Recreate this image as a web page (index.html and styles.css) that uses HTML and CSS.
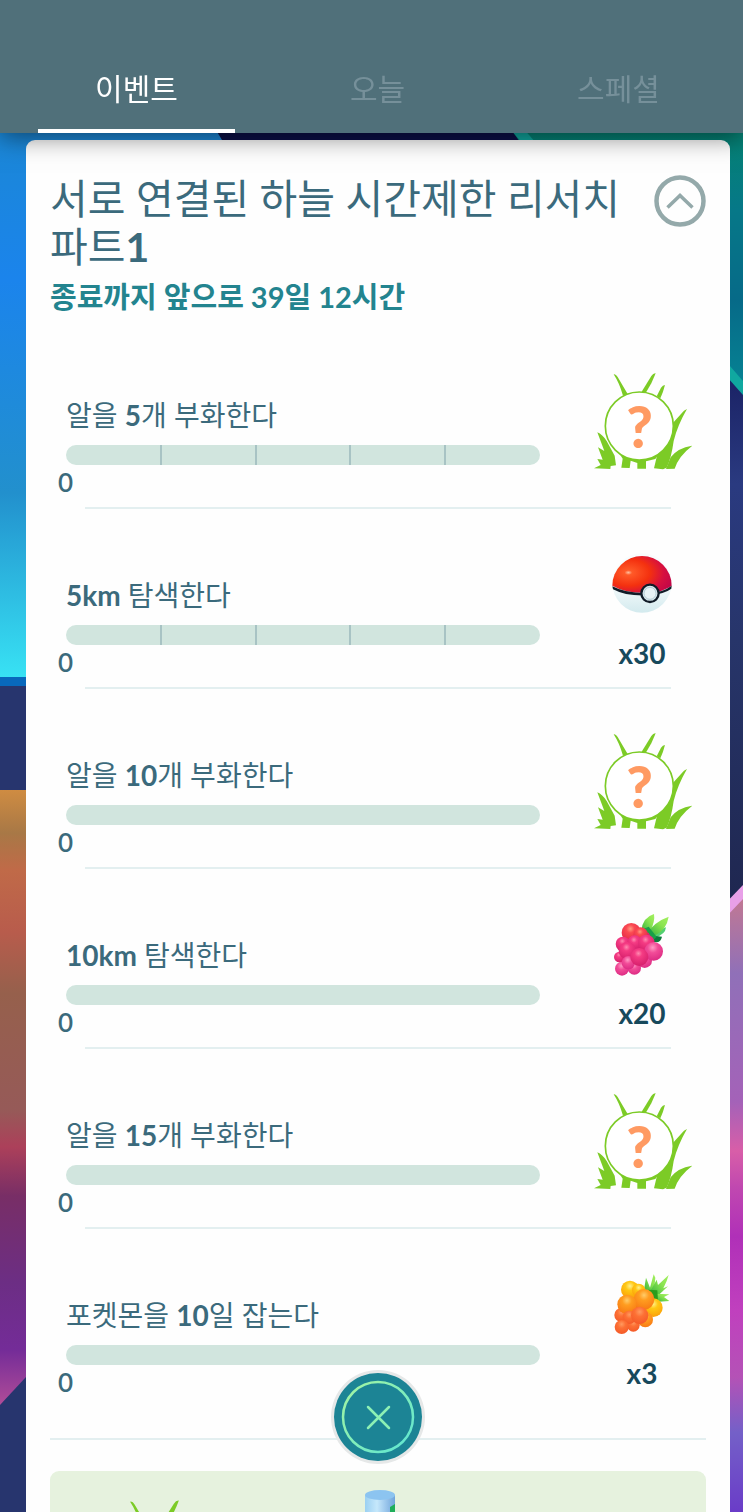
FILE: index.html
```html
<!DOCTYPE html>
<html lang="ko">
<head>
    <meta charset="UTF-8">
    <meta name="viewport" content="width=device-width, initial-scale=1.0">
    <title>리서치</title>
    <link rel="stylesheet" href="styles.css">
</head>
<body>
    <svg class="backdrop" viewBox="0 0 743 1512" preserveAspectRatio="none" aria-hidden="true">
        <defs>
            <linearGradient id="sky" gradientUnits="userSpaceOnUse" x1="0" y1="133" x2="0" y2="678">
                <stop offset="0" stop-color="#1b87d6"/>
                <stop offset=".27" stop-color="#1b84ec"/>
                <stop offset=".66" stop-color="#2290cd"/>
                <stop offset="1" stop-color="#38e2f4"/>
            </linearGradient>
            <linearGradient id="dusk" gradientUnits="userSpaceOnUse" x1="0" y1="790" x2="0" y2="1405">
                <stop offset="0" stop-color="#cf8c42"/>
                <stop offset=".07" stop-color="#a87846"/>
                <stop offset=".13" stop-color="#c06a48"/>
                <stop offset=".23" stop-color="#b85c4c"/>
                <stop offset=".33" stop-color="#96604c"/>
                <stop offset=".52" stop-color="#965a58"/>
                <stop offset=".58" stop-color="#ac405a"/>
                <stop offset=".66" stop-color="#782e66"/>
                <stop offset=".8" stop-color="#6c2e84"/>
                <stop offset=".91" stop-color="#742c98"/>
                <stop offset="1" stop-color="#b04c98"/>
            </linearGradient>
            <linearGradient id="sea" gradientUnits="userSpaceOnUse" x1="0" y1="133" x2="0" y2="390">
                <stop offset="0" stop-color="#058274"/>
                <stop offset=".3" stop-color="#067888"/>
                <stop offset=".65" stop-color="#066a88"/>
                <stop offset="1" stop-color="#068494"/>
            </linearGradient>
            <linearGradient id="night" gradientUnits="userSpaceOnUse" x1="0" y1="380" x2="0" y2="900">
                <stop offset="0" stop-color="#1b2366"/>
                <stop offset=".2" stop-color="#2a3a80"/>
                <stop offset=".5" stop-color="#27356a"/>
                <stop offset="1" stop-color="#1f2750"/>
            </linearGradient>
            <linearGradient id="dawn" gradientUnits="userSpaceOnUse" x1="0" y1="900" x2="0" y2="1512">
                <stop offset="0" stop-color="#c07894"/>
                <stop offset=".12" stop-color="#9070b8"/>
                <stop offset=".33" stop-color="#a462b8"/>
                <stop offset=".41" stop-color="#d85ea8"/>
                <stop offset=".47" stop-color="#c048b0"/>
                <stop offset=".55" stop-color="#b030b8"/>
                <stop offset=".67" stop-color="#c040be"/>
                <stop offset=".78" stop-color="#b452b6"/>
                <stop offset=".87" stop-color="#7460c8"/>
                <stop offset="1" stop-color="#6a3cc8"/>
            </linearGradient>
        </defs>
        <rect width="743" height="1512" fill="#27356e"/>
        <rect width="371" height="678" fill="url(#sky)"/>
        <rect y="677" width="371" height="9" fill="#0868bc"/>
        <rect y="790" width="371" height="700" fill="url(#dusk)"/>
        <path d="M0 1405 26 1377 371 1010V1512H0Z" fill="#27356e"/>
        <path d="M371 0H743V1512H371Z" fill="url(#night)"/>
        <path d="M210 120 240 170H540L505 120Z" fill="#0c1048"/>
        <path d="M505 120H743V384L540 172Z" fill="url(#sea)"/>
        <path d="M502 120H516L743 381V395L728 378Z" fill="#10a8a0"/>
        <path d="M743 890V1512H600V1040Z" fill="url(#dawn)"/>
        <path d="M743 885V899L600 1050V1034Z" fill="#e8a0e8"/>
    </svg>

    <!-- shared drawings -->
    <svg class="sprites" aria-hidden="true">
        <defs>
            <radialGradient id="ball-red" cx=".27" cy=".45" r=".8">
                <stop offset="0" stop-color="#ffc0a0"/>
                <stop offset=".08" stop-color="#ff5a28"/>
                <stop offset=".45" stop-color="#f4310f"/>
                <stop offset=".75" stop-color="#d60f40"/>
                <stop offset="1" stop-color="#c00648"/>
            </radialGradient>
            <linearGradient id="ball-white" x1="0" y1="0" x2="0" y2="1">
                <stop offset=".5" stop-color="#f8fcfd"/>
                <stop offset="1" stop-color="#d3eaee"/>
            </linearGradient>
            <radialGradient id="drupe-red" cx=".45" cy=".3" r=".7">
                <stop offset="0" stop-color="#ff9a80"/>
                <stop offset=".3" stop-color="#fb4a52"/>
                <stop offset="1" stop-color="#e02548"/>
            </radialGradient>
            <radialGradient id="drupe-pink" cx=".45" cy=".3" r=".7">
                <stop offset="0" stop-color="#ff8ab0"/>
                <stop offset=".3" stop-color="#f53c84"/>
                <stop offset="1" stop-color="#d61f6c"/>
            </radialGradient>
            <radialGradient id="drupe-rose" cx=".45" cy=".3" r=".7">
                <stop offset="0" stop-color="#ff9ac4"/>
                <stop offset=".4" stop-color="#f24c98"/>
                <stop offset="1" stop-color="#dd2c84"/>
            </radialGradient>
            <radialGradient id="drupe-gold" cx=".5" cy=".3" r=".7">
                <stop offset="0" stop-color="#fff08a"/>
                <stop offset=".35" stop-color="#ffc814"/>
                <stop offset="1" stop-color="#fba008"/>
            </radialGradient>
            <radialGradient id="drupe-orange" cx=".5" cy=".3" r=".7">
                <stop offset="0" stop-color="#ffcc6a"/>
                <stop offset=".35" stop-color="#ff9d20"/>
                <stop offset="1" stop-color="#f87a14"/>
            </radialGradient>
            <radialGradient id="drupe-coral" cx=".5" cy=".3" r=".7">
                <stop offset="0" stop-color="#ff9a60"/>
                <stop offset=".4" stop-color="#fd7034"/>
                <stop offset="1" stop-color="#f45a28"/>
            </radialGradient>
            <linearGradient id="leaf" x1="0" y1="1" x2="1" y2="0">
                <stop offset="0" stop-color="#2fae3c"/>
                <stop offset=".6" stop-color="#8ae450"/>
                <stop offset="1" stop-color="#a4f060"/>
            </linearGradient>
            <linearGradient id="ring" x1="0" y1="0" x2="1" y2="1">
                <stop offset="0" stop-color="#a6f5a0"/>
                <stop offset="1" stop-color="#5ce6d4"/>
            </linearGradient>
            <linearGradient id="vial" x1="0" y1="0" x2="1" y2="0">
                <stop offset="0" stop-color="#9bd0f2"/>
                <stop offset=".4" stop-color="#c6e8fb"/>
                <stop offset="1" stop-color="#6fa4dc"/>
            </linearGradient>
        </defs>

        <symbol id="grass" viewBox="66 65 300 300">
            <g fill="#7ccb26">
                <path d="M131 72Q137 70 143 80L173 131 159 136Q148 98 131 72Z"/>
                <path d="M257 69Q250 68 244 77L214 126 227 128Q246 100 257 69Z"/>
                <path d="M285 104Q278 104 273 112L260 138 271 144Q280 124 285 104Z"/>
                <path d="M351 176Q341 180 335 189L306 221Q308 262 282 290L262 312 252 354 279 357 290 352Q304 323 311 272 322 226 351 176Z"/>
                <path d="M367 286Q324 292 302 321L288 356 314 355Q326 317 367 286Z"/>
                <path d="M72 354 92 344 82 326 98 328 84 291 103 302 82 246Q97 252 110 272L134 316 138 345 122 347 121 356Z"/>
                <path d="M142 300 158 325 154 352 179 353 182 331 202 338 202 355 228 355 228 333 256 326 290 280 270 310 232 325 190 325Z"/>
            </g>
            <circle cx="208" cy="227" r="102" fill="#fff" stroke="#7ccb26" stroke-width="5"/>
            <text x="209" y="293" class="mystery" text-anchor="middle">?</text>
        </symbol>

        <symbol id="ball" viewBox="59 42 192 192">
            <circle cx="155" cy="135" r="89" fill="url(#ball-white)"/>
            <path d="M66 143A89 89 0 1 1 244 143Q220 161 178 164 110 168 66 143Z" fill="url(#ball-red)"/>
            <path d="M66 145Q110 168 178 165 220 162 244 143L243 152Q222 168 178 172 108 176 68 154Z" fill="#111c28"/>
            <circle cx="179" cy="166" r="26" fill="#d9eaef" stroke="#111c28" stroke-width="7"/>
            <circle cx="179" cy="166" r="18" fill="#e8f3f6" stroke="#b6ccd4" stroke-width="3"/>
        </symbol>

        <symbol id="razz" viewBox="64 68 192 192">
            <path d="M158 124Q162 84 196 74 200 96 184 128Z" fill="url(#leaf)"/>
            <path d="M232 114Q230 136 200 144L182 134Z" fill="#52d070"/>
            <path d="M220 142Q216 162 196 158L184 138Z" fill="#0c7c3c"/>
            <path d="M176 132Q196 98 240 82 234 120 200 138Z" fill="url(#leaf)"/>
            <path d="M156 122 180 112 204 142 186 160Z" fill="#18a048"/>
            <path d="M108 140 180 130 205 180 180 225 130 240 92 225Z" fill="#d8266c"/>
            <circle cx="128" cy="130" r="29" fill="url(#drupe-red)"/>
            <circle cx="156" cy="136" r="22" fill="url(#drupe-red)"/>
            <circle cx="103" cy="164" r="22" fill="url(#drupe-pink)"/>
            <circle cx="137" cy="236" r="20" fill="url(#drupe-rose)"/>
            <circle cx="168" cy="214" r="22" fill="url(#drupe-rose)"/>
            <circle cx="138" cy="160" r="22" fill="url(#drupe-pink)"/>
            <circle cx="173" cy="161" r="25" fill="url(#drupe-pink)"/>
            <circle cx="195" cy="186" r="28" fill="url(#drupe-rose)"/>
            <circle cx="92" cy="203" r="16" fill="url(#drupe-pink)"/>
            <circle cx="116" cy="184" r="26" fill="url(#drupe-pink)"/>
            <circle cx="100" cy="238" r="21" fill="url(#drupe-rose)"/>
            <circle cx="119" cy="220" r="20" fill="url(#drupe-rose)"/>
            <circle cx="152" cy="203" r="27" fill="url(#drupe-pink)"/>
        </symbol>

        <symbol id="golden" viewBox="64 45 192 192">
            <g fill="url(#leaf)">
                <path d="M166 98 172 62 184 92 195 52 200 62 196 104Z"/>
                <path d="M184 104 204 68 208 84 240 54 234 72 224 94 238 88 206 118Z"/>
                <path d="M196 110 242 112 226 120 242 132 210 134Z"/>
            </g>
            <path d="M178 98 206 100 208 132 190 124Z" fill="#2a9c1c"/>
            <path d="M108 110 180 105 205 155 180 190 130 210 92 195Z" fill="#f8741c"/>
            <circle cx="124" cy="98" r="27" fill="url(#drupe-gold)"/>
            <circle cx="150" cy="100" r="20" fill="url(#drupe-gold)"/>
            <circle cx="194" cy="152" r="28" fill="url(#drupe-gold)"/>
            <circle cx="170" cy="188" r="23" fill="url(#drupe-orange)"/>
            <circle cx="134" cy="205" r="19" fill="url(#drupe-coral)"/>
            <circle cx="98" cy="174" r="21" fill="url(#drupe-coral)"/>
            <circle cx="166" cy="127" r="31" fill="url(#drupe-orange)"/>
            <circle cx="115" cy="142" r="29" fill="url(#drupe-orange)"/>
            <circle cx="122" cy="181" r="20" fill="url(#drupe-coral)"/>
            <circle cx="153" cy="175" r="26" fill="url(#drupe-coral)"/>
            <circle cx="99" cy="210" r="21" fill="url(#drupe-coral)"/>
        </symbol>
    </svg>

    <nav class="tabs">
        <a href="#event" class="tab active" aria-current="page">이벤트</a>
        <a href="#today" class="tab">오늘</a>
        <a href="#special" class="tab">스페셜</a>
    </nav>

    <main class="card">
        <header class="card-head">
            <div class="heading">
                <h1>서로 연결된 하늘 시간제한 리서치 파트<b>1</b></h1>
                <p class="deadline">종료까지 앞으로 39일 12시간</p>
            </div>
            <button class="collapse" type="button" aria-label="접기">
                <svg viewBox="0 0 52 52" fill="none" stroke="#94a9aa">
                    <circle cx="26" cy="26" r="23.5" stroke-width="4.5"/>
                    <path d="M13.5 32.5 26 20.5 38.5 32.5" stroke-width="3.5"/>
                </svg>
            </button>
        </header>

        <ul class="tasks">
            <li class="task">
                <div class="goal">
                    <label for="task1">알을 <b>5</b>개 부화한다</label>
                    <progress id="task1" class="steps" value="0" max="5"></progress>
                    <span class="count">0</span>
                </div>
                <div class="reward"><svg class="grass"><use href="#grass"/></svg></div>
            </li>
            <li class="task">
                <div class="goal">
                    <label for="task2"><b>5km</b> 탐색한다</label>
                    <progress id="task2" class="steps" value="0" max="5"></progress>
                    <span class="count">0</span>
                </div>
                <div class="reward"><svg class="item"><use href="#ball"/></svg><span>x30</span></div>
            </li>
            <li class="task">
                <div class="goal">
                    <label for="task3">알을 <b>10</b>개 부화한다</label>
                    <progress id="task3" value="0" max="10"></progress>
                    <span class="count">0</span>
                </div>
                <div class="reward"><svg class="grass"><use href="#grass"/></svg></div>
            </li>
            <li class="task">
                <div class="goal">
                    <label for="task4"><b>10km</b> 탐색한다</label>
                    <progress id="task4" value="0" max="10"></progress>
                    <span class="count">0</span>
                </div>
                <div class="reward"><svg class="item"><use href="#razz"/></svg><span>x20</span></div>
            </li>
            <li class="task">
                <div class="goal">
                    <label for="task5">알을 <b>15</b>개 부화한다</label>
                    <progress id="task5" value="0" max="15"></progress>
                    <span class="count">0</span>
                </div>
                <div class="reward"><svg class="grass"><use href="#grass"/></svg></div>
            </li>
            <li class="task">
                <div class="goal">
                    <label for="task6">포켓몬을 <b>10</b>일 잡는다</label>
                    <progress id="task6" value="0" max="10"></progress>
                    <span class="count">0</span>
                </div>
                <div class="reward"><svg class="item"><use href="#golden"/></svg><span>x3</span></div>
            </li>
        </ul>

        <section class="bonus" aria-label="완료 보상">
            <svg class="grass"><use href="#grass"/></svg>
            <svg class="vial" viewBox="0 0 32 100">
                <path d="M1 6V100H31V6Z" fill="url(#vial)"/>
                <path d="M1 24Q8 30 13 24V100H1Z" fill="#7fbbe6"/>
                <path d="M26 18 31 15V26L26 28Z" fill="#1fae5a"/>
                <ellipse cx="16" cy="6" rx="15" ry="5" fill="#8cc4f0"/>
            </svg>
        </section>
    </main>

    <button class="close" type="button" aria-label="닫기">
        <svg viewBox="0 0 94 94" fill="none">
            <circle cx="47" cy="47" r="47" fill="#e6e8e8"/>
            <circle cx="47" cy="47" r="44" fill="#1c8495"/>
            <circle cx="47" cy="47" r="35" stroke="url(#ring)" stroke-width="2.5"/>
            <path d="M37 37 58 58M58 37 37 58" stroke="#8df0b4" stroke-width="2.5" stroke-linecap="round"/>
        </svg>
    </button>
</body>
</html>
```
FILE: styles.css
```css
:root {
    --header: #50707a;
    --text: #3b6a7c;
    --text-dark: #17495c;
    --accent: #23848f;
    --bar: #d1e5de;
    --tick: #a8c3c4;
    --line: #e3eff0;
}

* {
    box-sizing: border-box;
}

body {
    margin: 0;
    height: 100vh;
    overflow: hidden;
    display: flex;
    flex-direction: column;
    font-family: Lato, "Noto Sans CJK KR", sans-serif;
    color: var(--text);
    background: #27356e;
}

h1, p, ul {
    margin: 0;
    padding: 0;
    font-weight: normal;
}

button {
    padding: 0;
    border: none;
    background: none;
    cursor: pointer;
}

svg {
    display: block;
}

.backdrop {
    position: fixed;
    inset: 0;
    width: 100%;
    height: 100%;
    z-index: -1;
}

.sprites {
    position: absolute;
    width: 0;
    height: 0;
}

.mystery {
    font-family: Lato, sans-serif;
    font-size: 172px;
    font-weight: 900;
    fill: #ff9a62;
}

/* tabs */
.tabs {
    position: relative;
    z-index: 2;
    flex: none;
    display: grid;
    grid-template-columns: repeat(3, 1fr);
    padding: 46px 4px 0 16px;
    background: var(--header);
    box-shadow: 0 4px 24px rgba(0, 0, 0, 0.5);
}

.tab {
    margin: 0 22px;
    padding: 20px 0 19px;
    border-bottom: 4px solid transparent;
    font-size: 30px;
    line-height: 44px;
    text-align: center;
    text-decoration: none;
    color: #76909a;
}

.tab.active {
    color: white;
    border-color: white;
}

/* card */
.card {
    flex: 1;
    min-height: 0;
    overflow: hidden;
    margin: 7px 13px 0 26px;
    padding: 35px 24px 0;
    background: #fefefe;
    border-radius: 9px 9px 0 0;
}

.card-head {
    display: flex;
    justify-content: space-between;
    align-items: flex-start;
}

.heading {
    flex: 1;
    word-break: keep-all;
}

.heading h1 {
    font-size: 41px;
    line-height: 48px;
}

.deadline {
    margin-top: 6px;
    font-size: 29px;
    font-weight: bold;
    line-height: 40px;
    color: var(--accent);
}

.collapse svg {
    width: 52px;
    height: 52px;
}

/* tasks */
.tasks {
    list-style: none;
    margin-top: 12px;
    padding-bottom: 29px;
    border-bottom: 2px solid var(--line);
}

.task {
    display: grid;
    grid-template-columns: 1fr 128px;
    column-gap: 38px;
    padding-left: 16px;
    height: 180px;
    background: linear-gradient(var(--line), var(--line)) center bottom / calc(100% - 70px) 2px no-repeat;
}

.task:last-child {
    background: none;
}

.goal {
    display: flex;
    flex-direction: column;
    padding-top: 67px;
}

.goal label {
    font-size: 28px;
    line-height: 38px;
}

progress {
    appearance: none;
    display: block;
    width: 100%;
    height: 20px;
    margin-top: 11px;
    border: none;
    border-radius: 10px;
    overflow: hidden;
    background: var(--bar);
}

progress::-webkit-progress-bar {
    background: var(--bar);
}

progress::-webkit-progress-value {
    background: var(--accent);
}

.steps::-webkit-progress-bar {
    background:
        linear-gradient(var(--tick), var(--tick)) 20% 0 / 2px 100% no-repeat,
        linear-gradient(var(--tick), var(--tick)) 40% 0 / 2px 100% no-repeat,
        linear-gradient(var(--tick), var(--tick)) 60% 0 / 2px 100% no-repeat,
        linear-gradient(var(--tick), var(--tick)) 80% 0 / 2px 100% no-repeat,
        var(--bar);
}

.count {
    margin-left: -8px;
    font-size: 26px;
    font-weight: 600;
    line-height: 34px;
}

.reward {
    display: flex;
    flex-direction: column;
    align-items: center;
    padding-top: 43px;
    font-size: 28px;
    font-weight: bold;
    line-height: 34px;
    color: var(--text-dark);
}

.grass {
    width: 100px;
    height: 100px;
}

.item {
    width: 64px;
    height: 64px;
    margin-bottom: 20px;
}

/* bonus rewards */
.bonus {
    display: grid;
    grid-template-columns: repeat(3, 1fr);
    justify-items: center;
    margin-top: 31px;
    padding: 18px 0 40px 4px;
    border-radius: 9px;
    background: #e6f2de;
}

.bonus .grass {
    width: 116px;
    height: 116px;
    margin-top: 10px;
}

.vial {
    width: 32px;
    height: 100px;
}

/* close */
.close {
    position: fixed;
    left: 50%;
    bottom: 48px;
    transform: translateX(-50%);
    z-index: 3;
    margin-left: 6px;
    border-radius: 50%;
}

.close svg {
    width: 94px;
    height: 94px;
}
```
